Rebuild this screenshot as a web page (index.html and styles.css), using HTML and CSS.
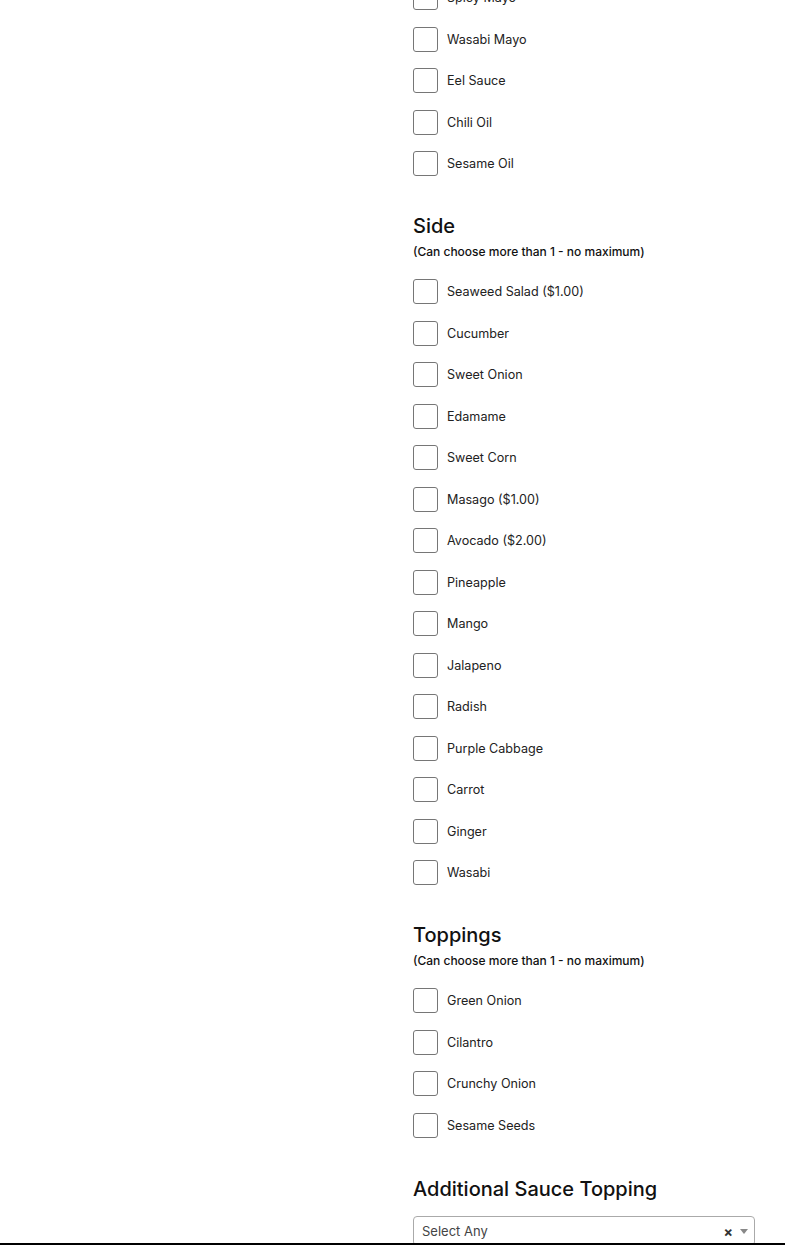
FILE: index.html
```html
<!DOCTYPE html>
<html lang="en">
<head>
<meta charset="utf-8">
<title>Order options</title>
<link rel="stylesheet" href="styles.css">
</head>
<body>
<div class="page">
  <div class="left"></div>
  <div class="options">
    <section class="group">
      <label class="opt"><input type="checkbox"><span>Spicy Mayo</span></label>
      <label class="opt"><input type="checkbox"><span>Wasabi Mayo</span></label>
      <label class="opt"><input type="checkbox"><span>Eel Sauce</span></label>
      <label class="opt"><input type="checkbox"><span>Chili Oil</span></label>
      <label class="opt"><input type="checkbox"><span>Sesame Oil</span></label>
    </section>
    <section class="group">
      <h3 class="title">Side</h3>
      <p class="hint">(Can choose more than 1 - no maximum)</p>
      <label class="opt"><input type="checkbox"><span>Seaweed Salad ($1.00)</span></label>
      <label class="opt"><input type="checkbox"><span>Cucumber</span></label>
      <label class="opt"><input type="checkbox"><span>Sweet Onion</span></label>
      <label class="opt"><input type="checkbox"><span>Edamame</span></label>
      <label class="opt"><input type="checkbox"><span>Sweet Corn</span></label>
      <label class="opt"><input type="checkbox"><span>Masago ($1.00)</span></label>
      <label class="opt"><input type="checkbox"><span>Avocado ($2.00)</span></label>
      <label class="opt"><input type="checkbox"><span>Pineapple</span></label>
      <label class="opt"><input type="checkbox"><span>Mango</span></label>
      <label class="opt"><input type="checkbox"><span>Jalapeno</span></label>
      <label class="opt"><input type="checkbox"><span>Radish</span></label>
      <label class="opt"><input type="checkbox"><span>Purple Cabbage</span></label>
      <label class="opt"><input type="checkbox"><span>Carrot</span></label>
      <label class="opt"><input type="checkbox"><span>Ginger</span></label>
      <label class="opt"><input type="checkbox"><span>Wasabi</span></label>
    </section>
    <section class="group">
      <h3 class="title">Toppings</h3>
      <p class="hint">(Can choose more than 1 - no maximum)</p>
      <label class="opt"><input type="checkbox"><span>Green Onion</span></label>
      <label class="opt"><input type="checkbox"><span>Cilantro</span></label>
      <label class="opt"><input type="checkbox"><span>Crunchy Onion</span></label>
      <label class="opt"><input type="checkbox"><span>Sesame Seeds</span></label>
    </section>
    <section class="group group-select">
      <h3 class="title title-select">Additional Sauce Topping</h3>
      <div class="select">
        <span class="placeholder">Select Any</span>
        <span class="clear">×</span>
        <span class="arrow"></span>
      </div>
    </section>
  </div>
</div>
<div class="footer-edge"></div>
</body>
</html>
```
FILE: styles.css
```css
html, body {
  margin: 0;
  padding: 0;
  background: #fff;
}
body {
  font-family: Inter, "Noto Sans", "Liberation Sans", sans-serif;
  color: #222;
  overflow: hidden;
}
.page {
  display: grid;
  grid-template-columns: 413px 1fr;
  margin-top: -15px;
}
.options {
  padding-right: 30px;
}
.group {
  padding-bottom: 21px;
}
.group-select {
  padding-top: 2px;
}
.title {
  margin: 0;
  font-size: 20px;
  line-height: 24px;
  font-weight: 500;
  color: #111;
}
.hint {
  margin: 6px 0 19.5px;
  font-size: 12px;
  line-height: 16px;
  font-weight: 500;
  color: #111;
}
.opt {
  display: flex;
  align-items: center;
  gap: 9px;
  height: 25px;
  margin-bottom: 16.5px;
  font-size: 12.6px;
  color: #222;
}
.opt input {
  appearance: none;
  -webkit-appearance: none;
  margin: 0;
  width: 25px;
  height: 25px;
  border: 1px solid #767676;
  border-radius: 3px;
  background: #fff;
  flex: none;
}
.title-select {
  margin-bottom: 15px;
}
.select {
  display: flex;
  align-items: center;
  height: 28px;
  border: 1px solid #aaa;
  border-radius: 4px;
  padding: 0 6px 0 8px;
  font-size: 13px;
  color: #444;
}
.placeholder {
  flex: 1;
}
.clear {
  font-size: 14px;
  font-weight: 700;
  color: #333;
  margin-right: 7px;
}
.arrow {
  width: 0;
  height: 0;
  border-left: 4px solid transparent;
  border-right: 4px solid transparent;
  border-top: 5px solid #888;
}
.footer-edge {
  position: fixed;
  left: 0;
  right: 0;
  bottom: 0;
  height: 2px;
  background: #000;
}
```
